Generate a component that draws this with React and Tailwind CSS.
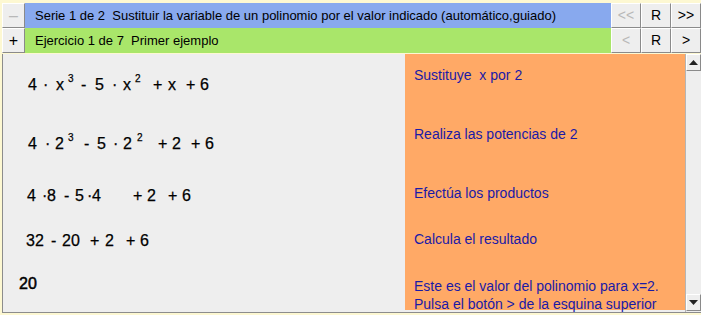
import React from 'react';

const font = { fontFamily: '"Liberation Sans", Arial, sans-serif' };

// raised-look button used in the header rows
function Btn({ children, disabled, className = '' }) {
  return (
    <div
      className={`flex items-center justify-center bg-[#eeeeee] border border-t-white border-l-white border-r-[#8a8a8a] border-b-[#8a8a8a] text-[14px] ${
        disabled ? 'text-[#b8b8b8]' : 'text-black'
      } ${className}`}
    >
      {children}
    </div>
  );
}

// expression laid out token by token: [text, x, isSup]
function Expr({ tokens, className = '' }) {
  return (
    <div className={`flex items-baseline h-[20px] ${className}`}>
      {tokens.map(([t, x, sup], i) => (
        <span
          key={i}
          className={sup ? 'text-[10px] relative -top-[8px]' : ''}
          style={{ marginLeft: i === 0 ? x - 2 : 0, width: i < tokens.length - 1 ? tokens[i + 1][1] - x : undefined, display: 'inline-block' }}
        >
          {t}
        </span>
      ))}
    </div>
  );
}

const row1 = [['4', 27], ['·', 42], ['x', 55], ['3', 67, 1], ['-', 80], ['5', 94], ['·', 111], ['x', 122], ['2', 134, 1], ['+', 152], ['x', 167], ['+', 185], ['6', 199]];
const row2 = [['4', 27], ['·', 44], ['2', 54], ['3', 67, 1], ['-', 83], ['5', 96], ['·', 112], ['2', 122], ['2', 136, 1], ['+', 157], ['2', 171], ['+', 190], ['6', 204]];
const row3 = [['4', 26], ['·', 41], ['8', 46], ['-', 63], ['5', 74], ['·', 86], ['4', 91], ['+', 132], ['2', 146], ['+', 167], ['6', 181]];
const row4 = [['32', 25], ['-', 50], ['20', 61], ['+', 89], ['2', 104], ['+', 125], ['6', 139]];

export default function App() {
  return (
    <div className="w-[701px] h-[315px] bg-[#fdf8d2] pt-[3px] pl-[2px] overflow-hidden" style={font}>
      {/* Serie row */}
      <div className="flex h-[25px]">
        <Btn disabled className="w-[23px] text-[16px]">–</Btn>
        <div className="flex-1 bg-[#88a9ee] flex items-center pl-[10px] text-[13px] text-black whitespace-pre">
          Serie 1 de 2  Sustituir la variable de un polinomio por el valor indicado (automático,guiado)
        </div>
        <Btn disabled className="w-[30px]">&lt;&lt;</Btn>
        <Btn className="w-[30px]">R</Btn>
        <Btn className="w-[30px]">&gt;&gt;</Btn>
      </div>

      {/* Ejercicio row */}
      <div className="flex h-[25px]">
        <Btn className="w-[23px] text-[16px]">+</Btn>
        <div className="flex-1 bg-[#a9e66a] flex items-center pl-[10px] text-[13px] text-black whitespace-pre">
          Ejercicio 1 de 7  Primer ejemplo
        </div>
        <Btn disabled className="w-[30px]">&lt;</Btn>
        <Btn className="w-[30px]">R</Btn>
        <Btn className="w-[30px]">&gt;</Btn>
      </div>

      {/* main area */}
      <div className="flex h-[259px] mt-[1px] border-l border-b border-[#8c8c8c] bg-[#eeeeee]">
        {/* left: expressions */}
        <div className="w-[402px] flex flex-col text-[16px] text-black leading-[20px] whitespace-pre [-webkit-text-stroke:0.25px_black]">
          <Expr tokens={row1} className="mt-[21px]" />
          <Expr tokens={row2} className="mt-[39px]" />
          <Expr tokens={row3} className="mt-[32px]" />
          <Expr tokens={row4} className="mt-[25px]" />
          <div className="mt-[23px] pl-[16px] h-[20px] [-webkit-text-stroke:0.5px_black]">20</div>
        </div>

        {/* right: instructions */}
        <div className="w-[280px] h-[256px] bg-[#ffa966] flex flex-col pl-[9px] text-[14px] text-[#1a1aa6] leading-[18px] whitespace-pre">
          <div className="mt-[12px]">Sustituye  x por 2</div>
          <div className="mt-[41px]">Realiza las potencias de 2</div>
          <div className="mt-[41px]">Efectúa los productos</div>
          <div className="mt-[28px]">Calcula el resultado</div>
          <div className="mt-[29px]">Este es el valor del polinomio para x=2.</div>
          <div>Pulsa el botón &gt; de la esquina superior</div>
        </div>

        {/* scrollbar */}
        <div className="flex-1 flex flex-col bg-[#eeeeee] border-l border-[#b5b5b5]">
          <div className="h-[17px] flex items-center justify-center bg-[#eeeeee] border border-t-white border-l-white border-r-[#8a8a8a] border-b-[#8a8a8a]">
            <svg width="9" height="5" viewBox="0 0 9 5"><path d="M0 5 L4.5 0 L9 5 Z" fill="#222" /></svg>
          </div>
          <div className="flex-1" />
          <div className="h-[17px] mb-[1px] flex items-center justify-center bg-[#eeeeee] border border-t-white border-l-white border-r-[#8a8a8a] border-b-[#8a8a8a]">
            <svg width="9" height="5" viewBox="0 0 9 5"><path d="M0 0 L9 0 L4.5 5 Z" fill="#222" /></svg>
          </div>
        </div>
      </div>
    </div>
  );
}
